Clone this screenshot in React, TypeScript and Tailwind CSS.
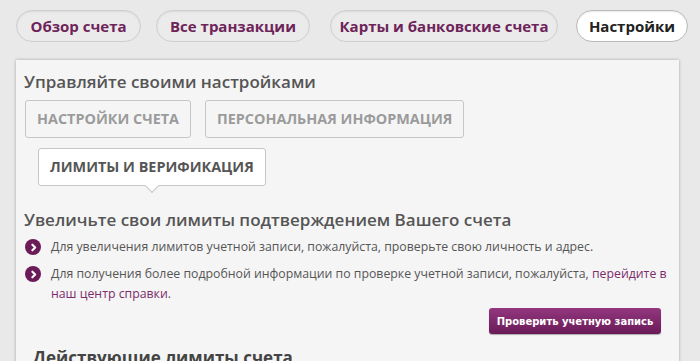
const tabs = [
  { label: "Обзор счета", cls: "w-[125px]" },
  { label: "Все транзакции", cls: "ml-[15px] w-[154px]" },
  { label: "Карты и банковские счета", cls: "ml-[20px] w-[228px]" },
  { label: "Настройки", cls: "ml-[18px] w-[112px]", active: true },
];

function Bullet() {
  return (
    <span className="mt-[2px] flex h-[16px] w-[16px] shrink-0 items-center justify-center rounded-full bg-[#6a1b58]">
      <svg width="9" height="9" viewBox="0 0 8 8" fill="none">
        <path d="M3 1.5 L5.5 4 L3 6.5" stroke="white" strokeWidth="1.9" strokeLinecap="round" strokeLinejoin="round" />
      </svg>
    </span>
  );
}

export default function App() {
  return (
    <div className="min-h-screen overflow-hidden bg-[#e9e9e9] font-['Open_Sans',sans-serif]">
      {/* top navigation */}
      <nav className="flex px-4 pt-[10px]">
        {tabs.map((t) => (
          <div
            key={t.label}
            className={`flex h-[32px] shrink-0 items-center justify-center whitespace-nowrap rounded-full border text-[15px] font-bold shadow-[inset_0_1px_2px_rgba(0,0,0,0.08)] ${t.cls} ${
              t.active ? "border-[#b9b9b9] bg-white text-[#222]" : "border-[#cfcfcf] bg-[#ebebeb] text-[#6e2459]"
            }`}
          >
            {t.label}
          </div>
        ))}
      </nav>

      <div className="ml-4 mt-[18px] w-[663px] bg-[#f5f5f5] pl-2 pr-2 pt-[10px] pb-6 shadow-[0_0_3px_rgba(0,0,0,0.3)]">
        <h2 className="text-[17px] font-semibold leading-6 text-[#555]">Управляйте своими настройками</h2>

        <div className="mt-[6px] flex flex-wrap gap-x-[14px] gap-y-[10px] pl-px">
          <div className="flex h-[38px] items-center rounded-[3px] border border-[#c6c6c6] px-[11px] text-[14.4px] font-bold text-[#9b9b9b]">
            НАСТРОЙКИ СЧЕТА
          </div>
          <div className="flex h-[38px] items-center rounded-[3px] border border-[#c6c6c6] px-[11px] text-[14.4px] font-bold text-[#9b9b9b]">
            ПЕРСОНАЛЬНАЯ ИНФОРМАЦИЯ
          </div>
          <div className="relative ml-[13px] flex h-[38px] items-center rounded-[3px] border border-[#c6c6c6] bg-white px-[11px] text-[14.4px] font-bold text-[#555]">
            ЛИМИТЫ И ВЕРИФИКАЦИЯ
            <span className="absolute -bottom-[6px] left-1/2 h-[10px] w-[10px] -translate-x-1/2 rotate-45 border-b border-r border-[#c6c6c6] bg-white" />
          </div>
        </div>

        <h2 className="mt-[22px] text-[17px] font-semibold leading-6 text-[#555]">
          Увеличьте свои лимиты подтверждением Вашего счета
        </h2>

        <ul className="mt-[5px] flex flex-col gap-[7px] pl-px text-[12.3px] leading-[20px] text-[#555]">
          <li className="flex gap-[10px]">
            <Bullet />
            <span>Для увеличения лимитов учетной записи, пожалуйста, проверьте свою личность и адрес.</span>
          </li>
          <li className="flex gap-[10px]">
            <Bullet />
            <span>
              Для получения более подробной информации по проверке учетной записи, пожалуйста,{" "}
              <a className="text-[#7b2c6b]">перейдите в наш центр справки</a>.
            </span>
          </li>
        </ul>

        <div className="mt-[4px] flex justify-end pr-[10px]">
          <button className="flex h-[26px] w-[172px] items-center justify-center rounded-[3px] bg-gradient-to-b from-[#93377f] to-[#6a1a58] font-['DejaVu_Sans',sans-serif] text-[10px] font-bold text-white shadow-[0_1px_1px_rgba(0,0,0,0.3)]">
            Проверить учетную запись
          </button>
        </div>

        <h2 className="mt-[12px] pl-[9px] text-[17px] font-bold leading-6 text-[#444]">Действующие лимиты счета</h2>
      </div>
    </div>
  );
}
